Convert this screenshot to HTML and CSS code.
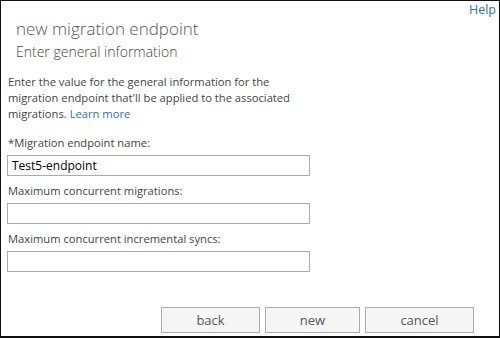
FILE: index.html
```html
<!DOCTYPE html>
<html lang="en">
  <head>
    <meta charset="UTF-8" />
    <title>new migration endpoint</title>
    <link rel="stylesheet" href="styles.css">
  </head>
  <body>
    <div class="dialog">
      <div class="topbar">
        <a href="#" class="help">Help</a>
      </div>

      <div class="header">
        <h1>new migration endpoint</h1>
        <h2>Enter general information</h2>
      </div>

      <p class="intro">
        Enter the value for the general information for the
        migration endpoint that'll be applied to the associated
        migrations. <a href="#" class="more">Learn more</a>
      </p>

      <div class="fields">
        <label class="field">
          <span>*Migration endpoint name:</span>
          <input type="text" value="Test5-endpoint" />
        </label>
        <label class="field">
          <span>Maximum concurrent migrations:</span>
          <input type="text" value="" />
        </label>
        <label class="field">
          <span>Maximum concurrent incremental syncs:</span>
          <input type="text" value="" />
        </label>
      </div>

      <div class="buttons">
        <button>back</button>
        <button>new</button>
        <button>cancel</button>
      </div>
    </div>
  </body>
</html>
```

FILE: styles.css
```css
html,
body {
  margin: 0;
  padding: 0;
  background: #fff;
}

body {
  font-family: "Open Sans", "Noto Sans", sans-serif;
  color: #444;
}

a {
  color: #2a6fc0;
  text-decoration: none;
}

.dialog {
  width: 500px;
  height: 338px;
  box-sizing: border-box;
  border: 1px solid #111;
  border-bottom-width: 2px;
  display: flex;
  flex-direction: column;
}

.topbar {
  display: flex;
  justify-content: flex-end;
  padding: 1px 3px 0 0;
  height: 16px;
}

.help {
  font-size: 12.5px;
  line-height: 16px;
}

.header {
  padding: 0 0 0 15px;
}

h1 {
  margin: 0;
  font-size: 17px;
  font-weight: 300;
  line-height: 22px;
  color: #555;
}

h2 {
  margin: 2px 0 0;
  font-size: 14px;
  font-weight: 300;
  line-height: 20px;
  color: #444;
}

.intro {
  margin: 12px 0 0 7px;
  width: 290px;
  font-size: 11.2px;
  line-height: 16px;
}

.intro .more {
  display: inline-block;
}

.fields {
  margin: 13px 0 0 6px;
  display: flex;
  flex-direction: column;
  gap: 7px;
}

.field {
  display: flex;
  flex-direction: column;
  font-size: 11.2px;
  line-height: 16px;
}

.field span {
  padding-left: 1px;
}

.field input {
  margin-top: 4px;
  width: 303px;
  height: 21px;
  box-sizing: border-box;
  border: 1px solid #ababab;
  padding: 0 4px;
  font-family: inherit;
  font-size: 12px;
  color: #000;
  outline: none;
}

.buttons {
  margin-top: auto;
  margin-bottom: 3px;
  padding-right: 25px;
  display: flex;
  justify-content: flex-end;
  gap: 5px;
}

.buttons button {
  height: 26px;
  border: 1px solid #ababab;
  background: #f5f5f5;
  font-family: inherit;
  font-size: 13px;
  color: #555;
  padding: 0;
}

.buttons button:nth-child(1) {
  width: 99px;
}

.buttons button:nth-child(2) {
  width: 95px;
}

.buttons button:nth-child(3) {
  width: 109px;
}
```
